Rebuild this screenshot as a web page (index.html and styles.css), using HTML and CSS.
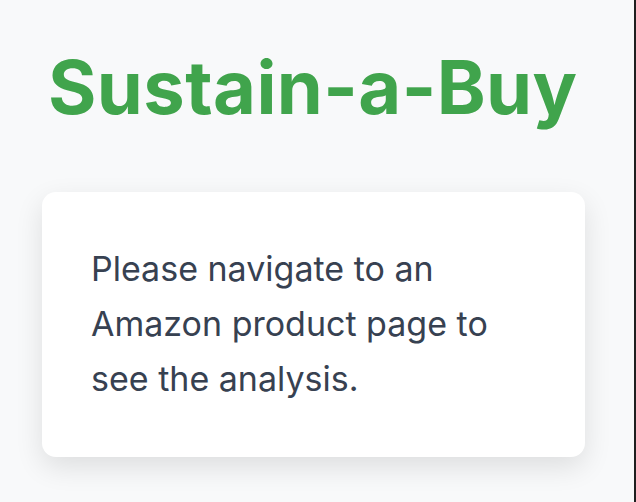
FILE: index.html
```html
<!DOCTYPE html>
<html lang="en">
<head>
<meta charset="utf-8">
<title>Sustain-a-Buy</title>
<link rel="stylesheet" href="styles.css">
</head>
<body>
  <main class="popup">
    <h1 class="title">Sustain-a-Buy</h1>
    <section class="card">
      <p class="message">Please navigate to an Amazon product page to see the analysis.</p>
    </section>
  </main>
</body>
</html>
```

FILE: styles.css
```css
html {
  background: #f8f9fa;
  border-right: 2px solid #1f1f1f;
}

body {
  margin: 0;
  font-family: Inter, "Noto Sans", "Liberation Sans", sans-serif;
}

.popup {
  display: flex;
  flex-direction: column;
  padding: 47px 0 60px 42px;
}

.title {
  margin: 0 0 65px 6px;
  font-size: 74px;
  line-height: 80px;
  font-weight: 700;
  color: #40a44c;
  letter-spacing: 0.4px;
  white-space: nowrap;
}

.card {
  width: 543px;
  box-sizing: border-box;
  background: #ffffff;
  border-radius: 14px;
  padding: 49px 48px 51px 49px;
  box-shadow: 0 10px 28px rgba(0, 0, 0, 0.11);
}

.message {
  margin: 0;
  font-size: 34px;
  line-height: 55px;
  color: #374151;
  font-weight: 400;
}
```
